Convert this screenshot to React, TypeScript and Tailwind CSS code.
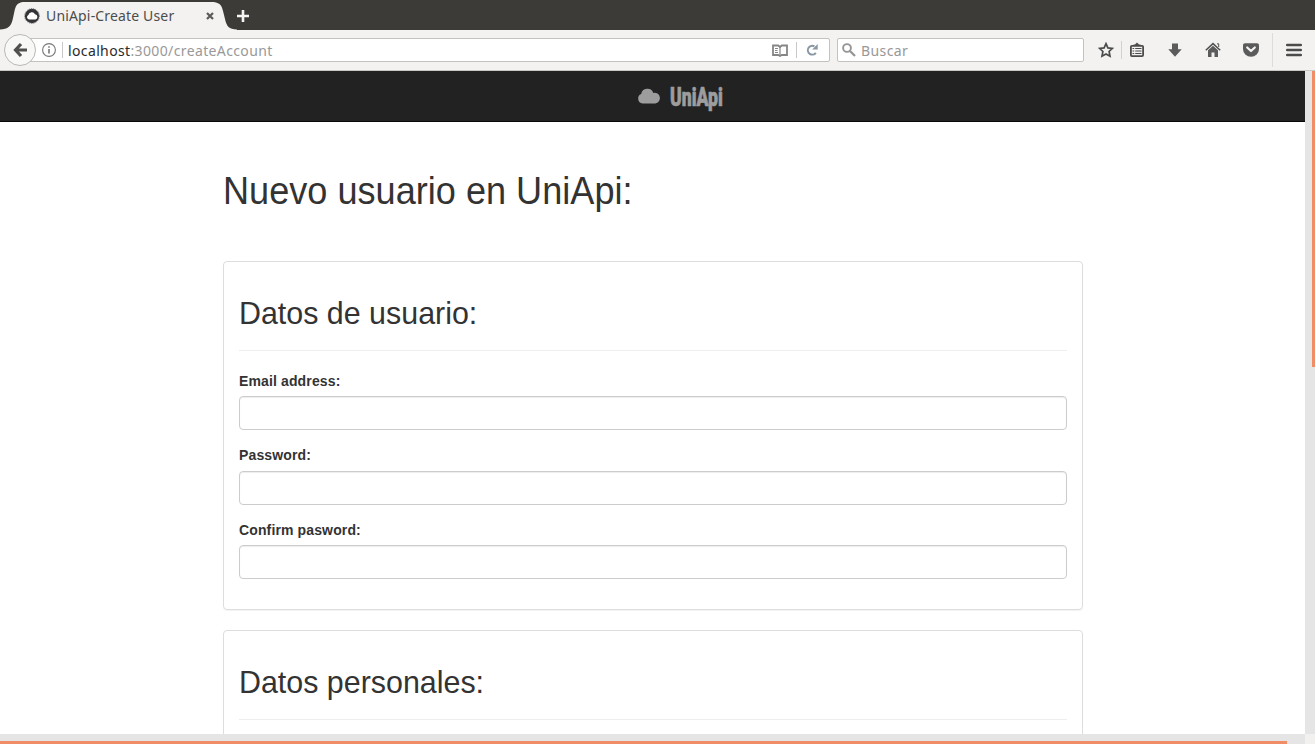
import type { ReactNode } from 'react';

function Icon({ w, h, className = '', children }: { w: number; h: number; className?: string; children: ReactNode }) {
  return (
    <svg width={w} height={h} viewBox={`0 0 ${w} ${h}`} className={`block shrink-0 ${className}`} fill="none">
      {children}
    </svg>
  );
}

function TabStrip() {
  return (
    <div className="relative flex h-[30px] shrink-0 bg-[#3c3b37]">
      <svg width="240" height="30" viewBox="0 0 240 30" className="absolute left-0 top-0">
        <path d="M0 30V29.5C8 29.5 11.500 26 13 18L14.500 11C16 4.500 18 2 25 2H211C219 2 221.500 4.500 223 11L225 19C226.500 26 229 29.500 237 29.500V30Z" fill="#f3f2f1" />
      </svg>
      <div className="relative flex w-[235px] items-center pl-6 pt-[2px]">
        <Icon w={16} h={16}>
          <circle cx="8" cy="8" r="7.200" fill="#333338" />
          <circle cx="8" cy="8" r="7.300" stroke="#666" strokeWidth="1" strokeDasharray="1.200 1" />
          <path d="M5 11.500a2.300 2.300 0 0 1-.6-4.400A3.500 3.500 0 0 1 11 6.200a2.700 2.700 0 0 1 .4 5.300Z" fill="#fff" />
        </Icon>
        <span className="ml-[6px] whitespace-nowrap text-[14px] leading-5 tracking-[0.16px] text-[#4c4c4c]">UniApi-Create User</span>
        <Icon w={8} h={8} className="absolute left-[206px] top-3">
          <path d="M1 1l6 6M7 1L1 7" stroke="#5b5a56" strokeWidth="2.200" />
        </Icon>
      </div>
      <Icon w={14} h={14} className="relative ml-[1px] mt-[9px]">
        <path d="M7 1v12M1 7h12" stroke="#f5f5f5" strokeWidth="2.600" />
      </Icon>
    </div>
  );
}

function Toolbar() {
  return (
    <div className="relative flex h-[41px] shrink-0 items-center border-b border-[#c9c8c4] bg-[#f3f2f1]">
      <div className="ml-5 flex h-[24px] w-[810px] items-center rounded-[2px] border border-[#c3c2bf] bg-white pl-[21px]">
        <Icon w={14} h={14}>
          <circle cx="7" cy="7" r="6.400" stroke="#777" strokeWidth="1.100" />
          <path d="M7 6v4.500M7 3.300v1.500" stroke="#777" strokeWidth="1.600" />
        </Icon>
        <div className="ml-[6px] h-4 w-px bg-[#c8c8c8]" />
        <span className="ml-[5px] mt-px whitespace-nowrap text-[14px] leading-5 tracking-[0.37px] text-[#999]">
          <span className="text-[#2b2b2b]">localhost</span>:3000/createAccount
        </span>
        <Icon w={16} h={13} className="ml-auto">
          <path d="M1 1.500h5.200L8 3l1.800-1.500H15v9.500h-5.200L8 12l-1.800-1H1Z" stroke="#868686" strokeWidth="1.800" />
          <path d="M8 3v9" stroke="#868686" strokeWidth="1.200" />
          <path d="M3 4.500h3M3 6.500h2.500M3 8.500h3" stroke="#868686" />
        </Icon>
        <div className="ml-[8px] h-4 w-px bg-[#c8c8c8]" />
        <Icon w={12} h={12} className="ml-[9px] mr-[11px]">
          <path d="M9.800 8.800A4.400 4.400 0 1 1 8.500 2.400" stroke="#8a97a4" strokeWidth="2" />
          <path d="M11.700 0v5.600H6.200Z" fill="#8a97a4" />
        </Icon>
      </div>
      <div className="absolute left-1 top-1 flex size-8 items-center justify-center rounded-full border border-[#b9b8b5] bg-[#f8f8f7]">
        <Icon w={15} h={16}>
          <path d="M8 2L2.500 8 8 14M3 8h11" stroke="#50504f" strokeWidth="3.200" />
        </Icon>
      </div>
      <div className="ml-[7px] flex h-[24px] w-[247px] items-center rounded-[2px] border border-[#c3c2bf] bg-white pl-[4px]">
        <Icon w={14} h={14}>
          <circle cx="5" cy="5" r="3.900" stroke="#959595" strokeWidth="1.900" />
          <path d="M8 8l5 5" stroke="#959595" strokeWidth="2.300" />
        </Icon>
        <span className="ml-[5px] mt-px text-[14px] leading-5 tracking-[0.4px] text-[#989898]">Buscar</span>
      </div>
      <Icon w={16} h={16} className="ml-[14px]">
        <path d="M8 1.700l1.900 4.200 4.500.5-3.300 3.100.9 4.700-4-2.300-4 2.300.9-4.700-3.300-3.100 4.500-.5Z" stroke="#4b4b4b" strokeWidth="1.700" />
      </Icon>
      <div className="ml-[7px] h-[18px] w-px bg-[#d2d1cf]" />
      <Icon w={16} h={16} className="ml-[7px]">
        <path d="M4.500 4V2.500H6L8 .6l2 1.900h1.500V4Z" fill="#4b4b4b" />
        <rect x="1.900" y="3.800" width="12.200" height="10.300" rx="1" stroke="#4b4b4b" strokeWidth="1.800" />
        <path d="M3.500 6.500h1.700M3.500 9h1.700M3.500 11.500h1.700M6.200 6.500h6.300M6.200 9h6.300M6.200 11.500h6.300" stroke="#4b4b4b" strokeWidth="1.200" />
      </Icon>
      <Icon w={16} h={16} className="ml-[22px]">
        <path d="M5 1.500h6V7.300h3.700L8 14.700 1.300 7.300H5Z" fill="#5b5b5b" />
      </Icon>
      <Icon w={16} h={16} className="ml-[22px]">
        <path d="M.8 8.200L8 1.600l7.200 6.600" stroke="#505050" strokeWidth="1.500" />
        <path d="M3 8.300L8 3.800l5 4.500V15H9.500v-4.500h-3V15H3Z" fill="#5b5b5b" />
        <path d="M12 1.800h1.700V5" stroke="#505050" />
      </Icon>
      <Icon w={16} h={16} className="ml-[22px]">
        <path d="M2 1.200h12c1.200 0 2 .7 2 2V7a8 7.800 0 0 1-16 0V3.200c0-1.300.8-2 2-2Z" fill="#5b5b5b" />
        <path d="M4.200 5.500L8 9l3.800-3.500" stroke="#f5f5f5" strokeWidth="2.200" strokeLinecap="round" strokeLinejoin="round" />
      </Icon>
      <div className="ml-[13px] h-[34px] w-px bg-[#dddcda]" />
      <Icon w={16} h={16} className="ml-[13px]">
        <path d="M1.200 3h13.600M1.200 8h13.600M1.200 13h13.600" stroke="#4b4b4b" strokeWidth="2.600" strokeLinecap="round" />
      </Icon>
    </div>
  );
}

function Field({ label }: { label: string }) {
  return (
    <label className="mb-[15px] block">
      <span className="block h-[25.4px] text-[14px] font-bold leading-5 tracking-[0.13px] text-[#333]">{label}</span>
      <input className="block h-[34px] w-full rounded-[4px] border border-[#ccc] bg-white px-3 shadow-[inset_0_1px_1px_rgba(0,0,0,0.075)] outline-none" />
    </label>
  );
}

function Panel({ title, children }: { title: string; children?: ReactNode }) {
  return (
    <section className="mb-5 h-[349px] shrink-0 rounded-[4px] border border-[#ddd] px-[15px] pt-[34px] shadow-[0_1px_1px_rgba(0,0,0,0.05)]">
      <h2 className="h-[34px] origin-left scale-x-[0.95] whitespace-nowrap text-[32px] leading-[34px]">{title}</h2>
      <hr className="mb-5 mt-5 border-t border-[#eee]" />
      {children}
    </section>
  );
}

export default function App() {
  return (
    <div className="flex h-[744px] w-[1315px] flex-col overflow-hidden bg-white font-['Noto_Sans',sans-serif]">
      <TabStrip />
      <Toolbar />
      <div className="flex min-h-0 flex-1">
        <main className="flex w-[1305px] flex-col overflow-hidden font-['Liberation_Sans',sans-serif] text-[#333]">
          <nav className="flex h-[51px] shrink-0 border-b border-[#080808] bg-[#222] pl-[637px]">
            <Icon w={24} h={16} className="mt-[17px]">
              <path d="M5.500 15.500a4.900 4.900 0 0 1-1.300-9.400A6.300 6.300 0 0 1 16.300 4.900a5.400 5.400 0 1 1 2 10.600Z" fill="#9d9d9d" />
            </Icon>
            <span className="ml-[9px] mt-[12px] block origin-left scale-x-[0.705] whitespace-nowrap font-['Roboto',sans-serif] text-[25px] font-black leading-[30px] text-[#9d9d9d] [-webkit-text-stroke:0.7px_#9d9d9d]">UniApi</span>
          </nav>
          <div className="ml-[223px] flex w-[860px] flex-col pt-[49px]">
            <h1 className="mb-[50px] h-10 origin-left scale-x-[0.926] whitespace-nowrap text-[39px] leading-10">Nuevo usuario en UniApi:</h1>
            <Panel title="Datos de usuario:">
              <Field label="Email address:" />
              <Field label="Password:" />
              <Field label="Confirm pasword:" />
            </Panel>
            <Panel title="Datos personales:" />
          </div>
        </main>
        <div className="flex w-[10px] justify-end bg-[#e5e5e5]">
          <div className="h-[296px] w-[3px] bg-[#f08c66]" />
        </div>
      </div>
      <div className="flex h-[10px] shrink-0">
        <div className="flex w-[1305px] items-end bg-[#e5e5e5]">
          <div className="h-[3px] w-[1287px] bg-[#f08c66]" />
        </div>
        <div className="w-[10px] bg-[#f2f1f0]" />
      </div>
    </div>
  );
}
